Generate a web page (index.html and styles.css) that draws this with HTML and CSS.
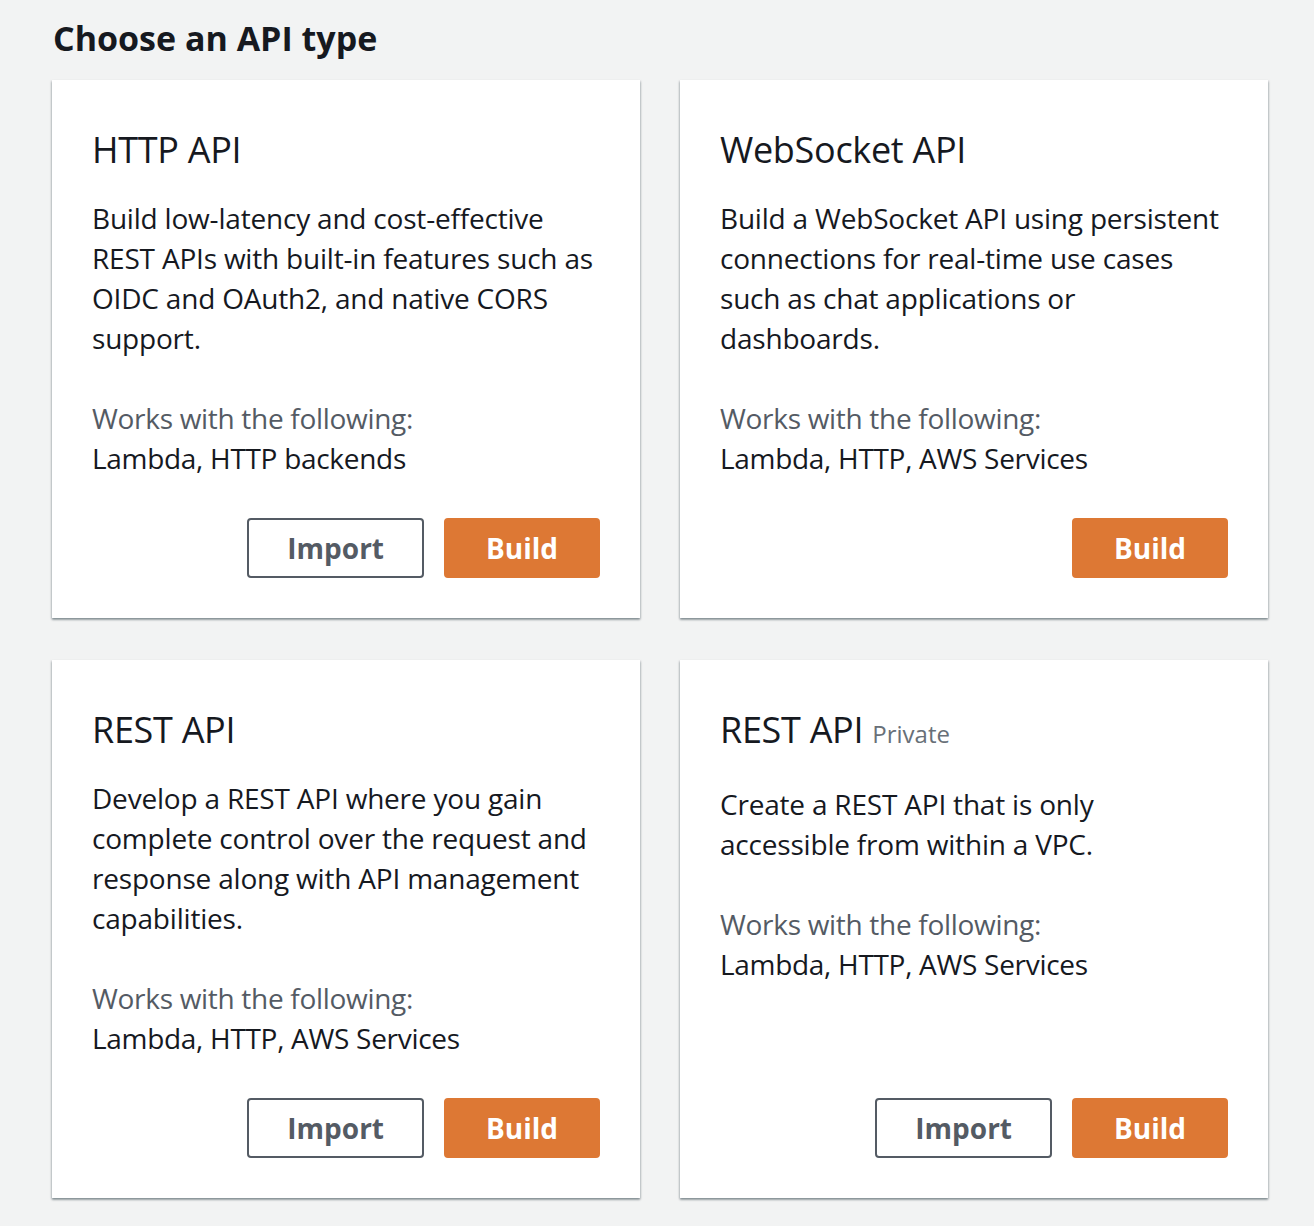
FILE: index.html
```html
<!DOCTYPE html>
<html lang="en">
<head>
<meta charset="utf-8">
<title>Choose an API type</title>
<link rel="stylesheet" href="styles.css">
</head>
<body>
<main class="page">
  <h1 class="page-title">Choose an API type</h1>
  <div class="grid">
    <section class="card">
      <h2 class="card-title">HTTP API</h2>
      <p class="card-desc">Build low-latency and cost-effective REST APIs with built-in features such as OIDC and OAuth2, and native CORS support.</p>
      <div class="works">
        <div class="works-label">Works with the following:</div>
        <div class="works-value">Lambda, HTTP backends</div>
      </div>
      <div class="actions">
        <button class="btn btn-normal">Import</button>
        <button class="btn btn-primary">Build</button>
      </div>
    </section>
    <section class="card">
      <h2 class="card-title">WebSocket API</h2>
      <p class="card-desc">Build a WebSocket API using persistent connections for real-time use cases such as chat applications or dashboards.</p>
      <div class="works">
        <div class="works-label">Works with the following:</div>
        <div class="works-value">Lambda, HTTP, AWS Services</div>
      </div>
      <div class="actions">
        <button class="btn btn-primary">Build</button>
      </div>
    </section>
    <section class="card">
      <h2 class="card-title">REST API</h2>
      <p class="card-desc">Develop a REST API where you gain complete control over the request and response along with API management capabilities.</p>
      <div class="works">
        <div class="works-label">Works with the following:</div>
        <div class="works-value">Lambda, HTTP, AWS Services</div>
      </div>
      <div class="actions">
        <button class="btn btn-normal">Import</button>
        <button class="btn btn-primary">Build</button>
      </div>
    </section>
    <section class="card">
      <h2 class="card-title card-title-tagged">REST API <span class="card-tag">Private</span></h2>
      <p class="card-desc">Create a REST API that is only accessible from within a VPC.</p>
      <div class="works">
        <div class="works-label">Works with the following:</div>
        <div class="works-value">Lambda, HTTP, AWS Services</div>
      </div>
      <div class="actions">
        <button class="btn btn-normal">Import</button>
        <button class="btn btn-primary">Build</button>
      </div>
    </section>
  </div>
</main>
</body>
</html>
```

FILE: styles.css
```css
* { box-sizing: border-box; }

body {
  margin: 0;
  background: #f2f3f3;
  font-family: "Open Sans", "Noto Sans", sans-serif;
  color: #16191f;
}

.page {
  padding: 14px 46px 28px 52px;
}

.page-title {
  margin: 0 0 18px 1px;
  font-size: 34px;
  line-height: 48px;
  font-weight: 700;
  color: #16191f;
}

.grid {
  display: grid;
  grid-template-columns: 588px 588px;
  column-gap: 40px;
  row-gap: 42px;
}

.card {
  display: flex;
  flex-direction: column;
  background: #ffffff;
  padding: 48px 40px 40px;
  box-shadow: 0 2px 2px 0 rgba(0, 28, 36, 0.3), 1px 1px 2px 0 rgba(0, 28, 36, 0.15), -1px 1px 2px 0 rgba(0, 28, 36, 0.15);
}

.card-title {
  margin: 0;
  font-size: 36px;
  line-height: 44px;
  font-weight: 400;
  letter-spacing: -0.3px;
  color: #16191f;
}

.card-title-tagged {
  padding-bottom: 2px;
}

.card-tag {
  font-size: 24px;
  letter-spacing: 0;
  color: #687078;
}

.card-desc {
  margin: 26px 0 0;
  font-size: 28px;
  line-height: 40px;
  letter-spacing: -0.2px;
}

.works {
  margin-top: 40px;
  font-size: 28px;
  line-height: 40px;
  letter-spacing: -0.3px;
}

.works-label {
  color: #545b64;
}

.actions {
  margin-top: auto;
  padding-top: 40px;
  display: flex;
  justify-content: flex-end;
  gap: 20px;
}

.btn {
  height: 60px;
  padding: 0 38px;
  border-radius: 4px;
  font-family: inherit;
  font-size: 28px;
  font-weight: 700;
  cursor: pointer;
}

.btn-normal {
  background: #ffffff;
  border: 2px solid #545b64;
  color: #545b64;
}

.btn-primary {
  min-width: 156px;
  background: #dd7834;
  border: 2px solid #dd7834;
  color: #ffffff;
}
```
